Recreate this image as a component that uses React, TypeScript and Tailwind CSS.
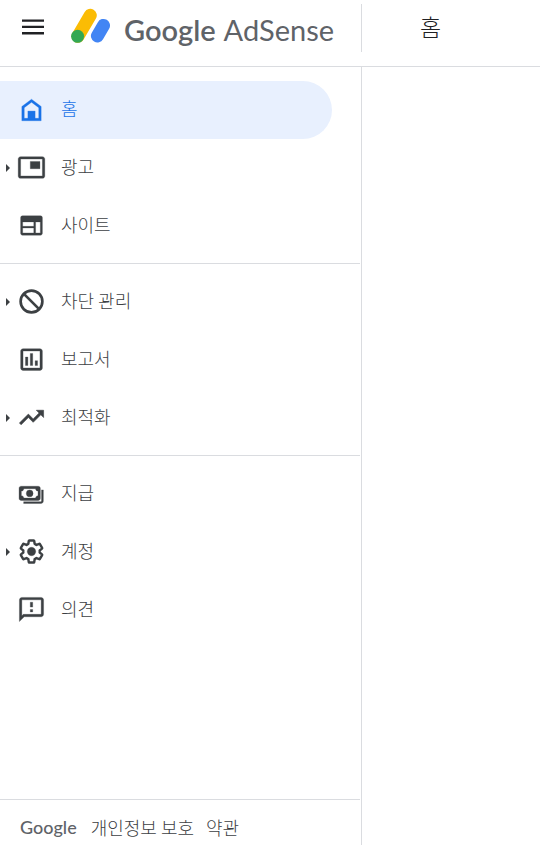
import React from "react";

type IconProps = { children: React.ReactNode };

function Icon({ children }: IconProps) {
  return (
    <svg
      className="size-[29px] shrink-0"
      viewBox="0 0 24 24"
      fill="currentColor"
      stroke="currentColor"
      strokeWidth=".25"
      aria-hidden="true"
    >
      {children}
    </svg>
  );
}

const HomeIcon = () => (
  <Icon>
    <path d="M4 21.300V9.500l8-6 8 6v11.800H4zm2-2h12v-8.800l-6-4.500-6 4.500v8.800z" />
    <path d="M9 13.300h6v7H9z" />
  </Icon>
);

const AdsIcon = () => (
  <Icon>
    <path d="M19 7h-8v6h8V7zm2-4H3c-1.100 0-2 .9-2 2v14c0 1.100.9 1.980 2 1.980h18c1.100 0 2-.88 2-1.980V5c0-1.100-.9-2-2-2zm0 16.010H3V4.980h18v14.030z" />
  </Icon>
);

const SitesIcon = () => (
  <Icon>
    <path
      fillRule="evenodd"
      d="M4.500 4h15C20.330 4 21 4.670 21 5.500v13c0 .83-.67 1.500-1.500 1.500h-15C3.670 20 3 19.330 3 18.500v-13C3 4.670 3.670 4 4.500 4zM4.700 9v3.700h9.200V9H4.700zm0 5v4.200h9.200V14H4.700zM15.400 9v9.200h3.900V9h-3.900z"
    />
  </Icon>
);

const BlockIcon = () => (
  <Icon>
    <circle cx="12" cy="12" r="9" fill="none" strokeWidth="2.200" />
    <path d="M5.700 5.700l12.600 12.600" strokeWidth="2.200" />
  </Icon>
);

const ReportsIcon = () => (
  <Icon>
    <path d="M19 3H5c-1.100 0-2 .9-2 2v14c0 1.100.9 2 2 2h14c1.100 0 2-.9 2-2V5c0-1.100-.9-2-2-2zm0 16H5V5h14v14zM7 10h2v7H7zM11 7h2v10h-2zM15 13h2v4h-2z" />
  </Icon>
);

const OptimizeIcon = () => (
  <Icon>
    <path
      strokeWidth=".5"
      d="M16 6l2.290 2.290-4.880 4.880-4-4L2 16.590 3.410 18l6-6 4 4 6.300-6.290L22 12V6z"
    />
  </Icon>
);

const PaymentsIcon = () => (
  <Icon>
    <path
      fillRule="evenodd"
      d="M3.500 6h14C18.600 6 19.300 6.700 19.300 7.800v8.200c0 1.100-.7 1.800-1.800 1.800h-14c-1.100 0-1.800-.7-1.800-1.800V7.800C1.700 6.700 2.400 6 3.500 6zM5.600 8c0 1.200-.8 2-2 2v3.800c1.200 0 2 .8 2 2h9.800c0-1.200.8-2 2-2V10c-1.200 0-2-.8-2-2H5.600z"
    />
    <circle cx="10.5" cy="11.9" r="2.800" />
    <path d="M20.300 9h1.500v9.300c0 1.200-.8 2-2 2H5.500v-1.500h14c.5 0 .8-.3.800-.8V9z" />
  </Icon>
);

const SettingsIcon = () => (
  <Icon>
    <path
      transform="translate(1.080 1.080) scale(.91)"
      fill="none"
      strokeWidth="2.200"
      strokeLinejoin="round"
      d="M19.430 12.980c.04-.32.07-.64.07-.98 0-.34-.03-.66-.07-.98l2.110-1.650c.19-.15.24-.42.12-.64l-2-3.460c-.09-.16-.26-.25-.44-.25-.06 0-.12.010-.17.030l-2.490 1c-.52-.4-1.080-.73-1.690-.98l-.38-2.650C14.460 2.180 14.250 2 14 2h-4c-.25 0-.46.180-.49.420l-.38 2.650c-.61.250-1.170.590-1.690.980l-2.490-1c-.06-.02-.12-.03-.18-.03-.17 0-.34.090-.43.250l-2 3.460c-.13.220-.07.490.12.640l2.110 1.650c-.04.320-.07.650-.07.980 0 .330.030.660.070.980l-2.110 1.650c-.19.150-.24.420-.12.640l2 3.460c.09.160.26.250.44.250.06 0 .12-.01.170-.03l2.490-1c.52.400 1.080.730 1.690.980l.38 2.650c.03.240.24.420.49.420h4c.25 0 .46-.18.490-.42l.38-2.650c.61-.25 1.170-.59 1.690-.98l2.490 1c.06.020.12.030.18.030.17 0 .34-.09.430-.25l2-3.460c.12-.22.070-.49-.12-.64l-2.110-1.650z"
    />
    <circle cx="12" cy="12" r="3.500" />
  </Icon>
);

const FeedbackIcon = () => (
  <Icon>
    <path d="M20 2H4c-1.100 0-1.990.9-1.990 2L2 22l4-4h14c1.100 0 2-.9 2-2V4c0-1.100-.9-2-2-2zm0 14H5.170L4 17.170V4h16v12zM11 12h2v2h-2zM11 6h2v4h-2z" />
  </Icon>
);

function Logo() {
  return (
    <svg className="h-[38px] w-[39px] shrink-0" viewBox="71 8 39 38" aria-hidden="true">
      <path d="M90.300 15.300 78 36.300" stroke="#fbbc04" strokeWidth="13" strokeLinecap="round" />
      <circle cx="77.600" cy="36.300" r="6.500" fill="#34a853" />
      <path d="M103.500 25.400 97.400 35.900" stroke="#4285f4" strokeWidth="13" strokeLinecap="round" />
    </svg>
  );
}

type NavItemProps = {
  label: string;
  icon: React.ReactNode;
  expandable?: boolean;
  active?: boolean;
};

function NavItem({ label, icon, expandable, active }: NavItemProps) {
  return (
    <a
      href="#"
      aria-current={active ? "page" : undefined}
      className={
        active
          ? "mr-7 flex h-[58px] items-center rounded-r-full bg-[#e8f0fe] pb-px text-[#1a73e8]"
          : "mr-7 flex h-[58px] items-center rounded-r-full pb-px text-[#3c4043]"
      }
    >
      <span className="flex w-[17px] shrink-0 pl-1.5">
        {expandable && (
          <svg className="h-2 w-1" viewBox="0 0 4 8" fill="currentColor" aria-hidden="true">
            <path d="M0 0l4 4-4 4z" />
          </svg>
        )}
      </span>
      {icon}
      <span className="ml-[15px] pb-1 text-lg font-light">{label}</span>
    </a>
  );
}

const groups: NavItemProps[][] = [
  [
    { label: "홈", icon: <HomeIcon />, active: true },
    { label: "광고", icon: <AdsIcon />, expandable: true },
    { label: "사이트", icon: <SitesIcon /> },
  ],
  [
    { label: "차단 관리", icon: <BlockIcon />, expandable: true },
    { label: "보고서", icon: <ReportsIcon /> },
    { label: "최적화", icon: <OptimizeIcon />, expandable: true },
  ],
  [
    { label: "지급", icon: <PaymentsIcon /> },
    { label: "계정", icon: <SettingsIcon />, expandable: true },
    { label: "의견", icon: <FeedbackIcon /> },
  ],
];

function Header() {
  return (
    <header className="flex h-[67px] border-b border-[#dadce0]">
      <div className="mt-1 mb-3.5 flex w-[362px] shrink-0 items-center border-r border-[#dadce0] pb-0.5 pl-[21px]">
        <button type="button" aria-label="메뉴" className="text-[#202124]">
          <svg className="size-6" viewBox="0 0 24 24" fill="currentColor" aria-hidden="true">
            <path d="M1 4.500h22v2.300H1zM1 10.800h22v2.300H1zM1 17.100h22v2.300H1z" />
          </svg>
        </button>
        <a href="#" className="ml-[26px] flex items-center text-[#5f6368]">
          <Logo />
          <span className="ml-3.5 flex gap-2 pt-1.5 font-['Lato',sans-serif] text-[29px] leading-9">
            <span className="font-semibold">Google</span>
            <span>AdSense</span>
          </span>
        </a>
      </div>
      <h1 className="ml-[58px] pt-2 text-[23px] leading-9 font-light text-[#202124]">홈</h1>
    </header>
  );
}

function Sidebar() {
  return (
    <aside className="flex w-[362px] shrink-0 flex-col border-r border-[#dadce0]">
      <nav className="mr-px pt-1.5">
        {groups.map((group, i) => (
          <div
            key={i}
            className={i > 0 ? "border-t border-[#dadce0] pt-[9px] pb-2" : "pt-2 pb-2"}
          >
            {group.map((item) => (
              <NavItem key={item.label} {...item} />
            ))}
          </div>
        ))}
      </nav>
      <footer className="mt-auto mr-px flex h-[46px] items-center border-t border-[#dadce0] pt-2 pl-5 text-lg font-light text-[#3c4043]">
        <a href="#" className="font-['Lato',sans-serif] font-medium text-[#5f6368]">
          Google
        </a>
        <a href="#" className="ml-3.5">개인정보 보호</a>
        <a href="#" className="ml-3">약관</a>
      </footer>
    </aside>
  );
}

function App() {
  return (
    <div className="flex min-h-screen flex-col bg-white font-['Noto_Sans_CJK_KR',sans-serif]">
      <Header />
      <div className="flex flex-1">
        <Sidebar />
        <main className="flex-1" />
      </div>
    </div>
  );
}

export default App;
